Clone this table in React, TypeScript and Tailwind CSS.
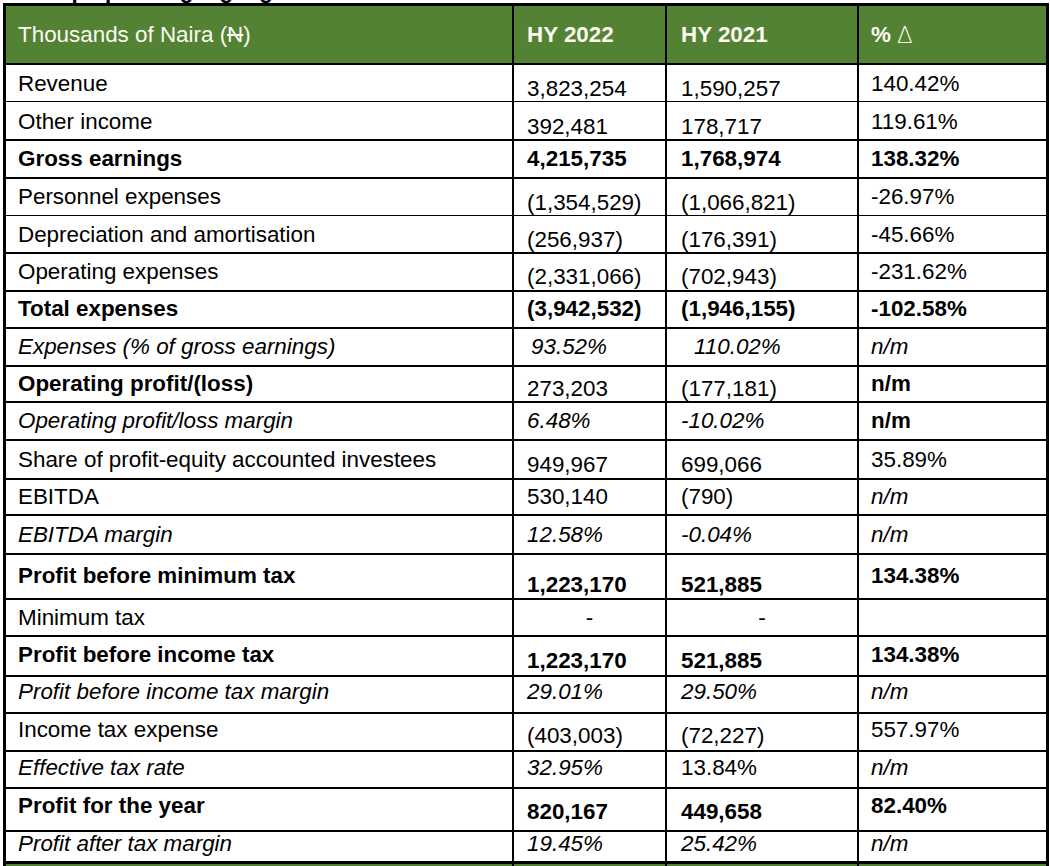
import React from "react";

type Row = {
  label: string;
  v2: string;
  v3: string;
  v4: string;
  bold?: boolean;
  italic?: boolean;
  h: number;
  lp: number;
  np: number;
  center2?: boolean;
  center3?: boolean;
  ex2?: number;
  ex3?: number;
  it2?: boolean;
  it3?: boolean;
  it4?: boolean;
  b23?: boolean;
  b4?: boolean;
};

const rows: Row[] = [
  { label: "Revenue", v2: "3,823,254", v3: "1,590,257", v4: "140.42%", h: 35, lp: 7, np: 12 },
  { label: "Other income", v2: "392,481", v3: "178,717", v4: "119.61%", h: 37, lp: 8, np: 13 },
  { label: "Gross earnings", v2: "4,215,735", v3: "1,768,974", v4: "138.32%", bold: true, b23: true, b4: true, h: 36, lp: 6, np: 6 },
  { label: "Personnel expenses", v2: "(1,354,529)", v3: "(1,066,821)", v4: "-26.97%", h: 35, lp: 6, np: 12 },
  { label: "Depreciation and amortisation", v2: "(256,937)", v3: "(176,391)", v4: "-45.66%", h: 36, lp: 7, np: 12 },
  { label: "Operating expenses", v2: "(2,331,066)", v3: "(702,943)", v4: "-231.62%", h: 36, lp: 6, np: 11 },
  { label: "Total expenses", v2: "(3,942,532)", v3: "(1,946,155)", v4: "-102.58%", bold: true, b23: true, b4: true, h: 35, lp: 5, np: 5 },
  { label: "Expenses (% of gross earnings)", v2: "93.52%", v3: "110.02%", v4: "n/m", italic: true, it2: true, it3: true, it4: true, h: 36, lp: 6, np: 6, ex2: 4, ex3: 13 },
  { label: "Operating profit/(loss)", v2: "273,203", v3: "(177,181)", v4: "n/m", bold: true, b4: true, h: 34, lp: 5, np: 10 },
  { label: "Operating profit/loss margin", v2: "6.48%", v3: "-10.02%", v4: "n/m", italic: true, it2: true, it3: true, b4: true, h: 36, lp: 6, np: 6 },
  { label: "Share of profit-equity accounted investees", v2: "949,967", v3: "699,066", v4: "35.89%", h: 37, lp: 7, np: 12 },
  { label: "EBITDA", v2: "530,140", v3: "(790)", v4: "n/m", it4: true, h: 34, lp: 5, np: 5 },
  { label: "EBITDA margin", v2: "12.58%", v3: "-0.04%", v4: "n/m", italic: true, it2: true, it3: true, it4: true, h: 37, lp: 7, np: 7 },
  { label: "Profit before minimum tax", v2: "1,223,170", v3: "521,885", v4: "134.38%", bold: true, b23: true, b4: true, h: 43, lp: 9, np: 18 },
  { label: "Minimum tax", v2: "-", v3: "-", v4: "", h: 35, lp: 6, np: 6, center2: true, center3: true },
  { label: "Profit before income tax", v2: "1,223,170", v3: "521,885", v4: "134.38%", bold: true, b23: true, b4: true, h: 38, lp: 6, np: 12 },
  { label: "Profit before income tax margin", v2: "29.01%", v3: "29.50%", v4: "n/m", italic: true, it2: true, it3: true, it4: true, h: 35, lp: 3, np: 3 },
  { label: "Income tax expense", v2: "(403,003)", v3: "(72,227)", v4: "557.97%", h: 36, lp: 4, np: 10 },
  { label: "Effective tax rate", v2: "32.95%", v3: "13.84%", v4: "n/m", italic: true, it2: true, it4: true, h: 35, lp: 4, np: 4 },
  { label: "Profit for the year", v2: "820,167", v3: "449,658", v4: "82.40%", bold: true, b23: true, b4: true, h: 41, lp: 5, np: 11 },
  { label: "Profit after tax margin", v2: "19.45%", v3: "25.42%", v4: "n/m", italic: true, it2: true, it3: true, it4: true, h: 29, lp: 0, np: 0 },
];

export default function App() {
  return (
    <div
      className="w-[1050px] bg-white text-black text-[22.4px] leading-[24px]"
      style={{ fontFamily: '"Liberation Sans", Arial, sans-serif' }}
    >
      <div className="h-[3px] overflow-hidden pl-[18px]">
        <div className="mt-[-21px] font-bold leading-[24px]">Group operating highlights</div>
      </div>
      <div className="ml-[3px] w-[1046px] border-[3px] border-black bg-black flex flex-col gap-[2px]">
        <div className="grid grid-cols-[506px_151px_190px_187px] gap-[2px] h-[57px] text-[#fbfbef]">
          <div className="bg-[#548235] flex items-center pl-[12px]">
            <span>
              Thousands of Naira (<span className="line-through">N</span>)
            </span>
          </div>
          <div className="bg-[#548235] flex items-center pl-[13px] font-bold">HY 2022</div>
          <div className="bg-[#548235] flex items-center pl-[14px] font-bold">HY 2021</div>
          <div className="bg-[#548235] flex items-center pl-[12px]">
            <span className="font-bold">%</span>
            <span
              className="ml-[6px] text-[23px]"
              style={{ fontFamily: '"DejaVu Sans", sans-serif', fontWeight: 200 }}
            >
              Δ
            </span>
          </div>
        </div>
        {rows.map((r) => {
          const weight = r.bold ? "font-bold" : "font-normal";
          const it = r.italic ? "italic" : "not-italic";
          const w23 = r.b23 ? "font-bold" : "font-normal";
          const w4 = r.b4 ? "font-bold" : "font-normal";
          return (
            <div
              key={r.label}
              className="grid grid-cols-[506px_151px_190px_187px] gap-[2px]"
              style={{ height: r.h }}
            >
              <div
                className={`bg-white pl-[12px] whitespace-nowrap ${weight} ${it}`}
                style={{ paddingTop: r.lp }}
              >
                {r.label}
              </div>
              <div
                className={`bg-white whitespace-nowrap ${w23} ${r.it2 ? "italic" : "not-italic"} ${r.center2 ? "text-center" : ""}`}
                style={{ paddingTop: r.np, paddingLeft: r.center2 ? 0 : 13 + (r.ex2 || 0) }}
              >
                {r.v2}
              </div>
              <div
                className={`bg-white whitespace-nowrap ${w23} ${r.it3 ? "italic" : "not-italic"} ${r.center3 ? "text-center" : ""}`}
                style={{ paddingTop: r.np, paddingLeft: r.center3 ? 0 : 14 + (r.ex3 || 0) }}
              >
                {r.v3}
              </div>
              <div
                className={`bg-white pl-[12px] whitespace-nowrap ${w4} ${r.it4 ? "italic" : "not-italic"}`}
                style={{ paddingTop: r.lp }}
              >
                {r.v4}
              </div>
            </div>
          );
        })}
        <div className="grid grid-cols-[506px_151px_190px_187px] gap-[2px] h-[40px] mt-[1px]">
          <div className="bg-[#548235]" />
          <div className="bg-[#548235]" />
          <div className="bg-[#548235]" />
          <div className="bg-[#548235]" />
        </div>
      </div>
    </div>
  );
}
